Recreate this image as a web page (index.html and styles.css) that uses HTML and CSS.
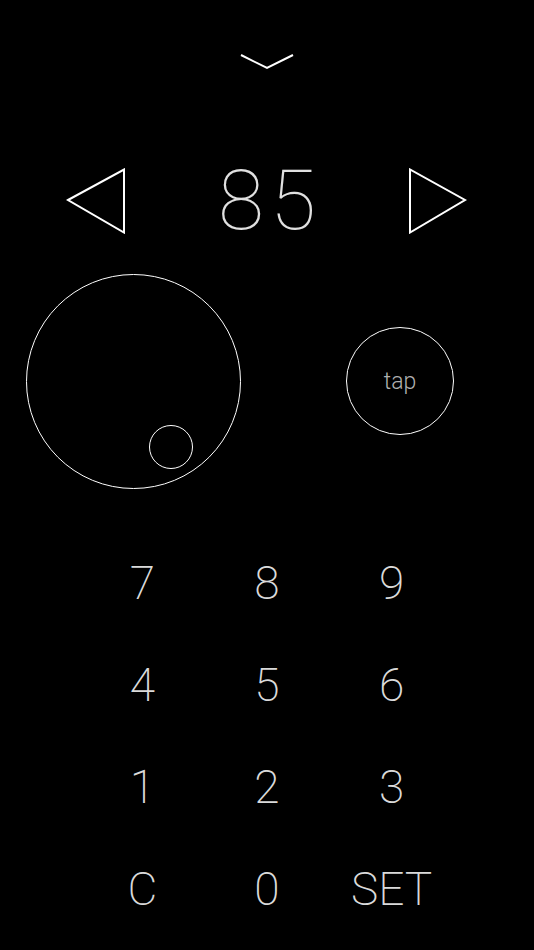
FILE: index.html
```html
<!DOCTYPE html>
<html>
<head>
<meta charset="utf-8">
<link rel="stylesheet" href="styles.css">
</head>
<body>
<div class="screen">
  <div class="top">
    <svg class="chevron" width="56" height="17" viewBox="0 0 56 17">
      <polyline points="2,2 28,15 54,2" fill="none" stroke="#fff" stroke-width="2"/>
    </svg>
  </div>
  <div class="nav">
    <svg class="tri" width="60" height="66" viewBox="0 0 60 66">
      <polygon points="2,32 58,1.5 58,64.5" fill="none" stroke="#fff" stroke-width="2" stroke-linejoin="miter"/>
    </svg>
    <div class="value">85</div>
    <svg class="tri" width="60" height="66" viewBox="0 0 60 66">
      <polygon points="2,1.5 2,64.5 57,32" fill="none" stroke="#fff" stroke-width="2" stroke-linejoin="miter"/>
    </svg>
  </div>
  <div class="controls">
    <div class="joystick">
      <div class="knob"></div>
    </div>
    <div class="tap">tap</div>
  </div>
  <div class="keypad">
    <div class="key">7</div><div class="key">8</div><div class="key">9</div>
    <div class="key">4</div><div class="key">5</div><div class="key">6</div>
    <div class="key">1</div><div class="key">2</div><div class="key">3</div>
    <div class="key">C</div><div class="key">0</div><div class="key">SET</div>
  </div>
</div>
</body>
</html>
```

FILE: styles.css
```css
html, body {
  margin: 0;
  padding: 0;
  background: #000;
}
body {
  font-family: Roboto, "Liberation Sans", sans-serif;
  font-weight: 100;
  color: #d6d6d6;
}
.screen {
  width: 534px;
  height: 950px;
  overflow: hidden;
  display: flex;
  flex-direction: column;
}
.top {
  height: 159px;
  box-sizing: border-box;
  padding-top: 53px;
  display: flex;
  justify-content: center;
}
.chevron {
  display: block;
}
.nav {
  height: 84px;
  display: flex;
  align-items: center;
  justify-content: space-between;
  padding: 0 66px;
}
.tri {
  display: block;
}
.value {
  font-size: 84px;
  line-height: 84px;
  color: #e0e0e0;
  letter-spacing: 6px;
  padding-left: 6px;
}
.controls {
  margin-top: 30px;
  height: 216px;
  display: flex;
  align-items: center;
  padding-left: 26px;
  gap: 105px;
}
.joystick {
  position: relative;
  width: 215px;
  height: 215px;
  box-sizing: border-box;
  border: 1.5px solid #fff;
  border-radius: 50%;
}
.knob {
  position: absolute;
  left: 122px;
  top: 150px;
  width: 44px;
  height: 44px;
  box-sizing: border-box;
  border: 1.5px solid #fff;
  border-radius: 50%;
}
.tap {
  width: 108px;
  height: 108px;
  box-sizing: border-box;
  border: 1.5px solid #fff;
  border-radius: 50%;
  display: flex;
  align-items: center;
  justify-content: center;
  font-size: 23px;
  color: #b0b0b0;
  font-weight: 300;
}
.keypad {
  margin: 43px auto 0;
  width: 374px;
  display: grid;
  grid-template-columns: repeat(3, 1fr);
  grid-auto-rows: 102px;
}
.key {
  font-size: 46px;
  line-height: 102px;
  text-align: center;
  color: #dadada;
  font-weight: 200;
}
```
